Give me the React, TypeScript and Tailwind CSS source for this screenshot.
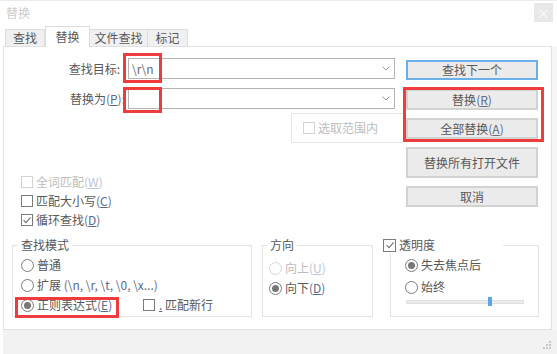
import clsx from "clsx";
import type { ReactNode } from "react";

/* Mnemonic such as (R) – latin part renders a little bluish, letter underlined */
function Key({ k, disabled = false }: { k: string; disabled?: boolean }) {
  return (
    <span className={disabled ? "text-[#bcc5d6]" : "text-[#5d6a86]"}>
      (<span className="underline underline-offset-[1px]">{k}</span>)
    </span>
  );
}

function CheckBox({ checked = false, disabled = false, big = false }: { checked?: boolean; disabled?: boolean; big?: boolean }) {
  return (
    <span
      className={clsx(
        "flex shrink-0 items-center justify-center border bg-white",
        big ? "h-[13px] w-[13px]" : "h-[12px] w-[12px]",
        disabled ? "border-[#d4d4d4]" : "border-[#7b7b7b]"
      )}
    >
      {checked && (
        <svg width="10" height="10" viewBox="0 0 10 10" fill="none">
          <path d="M1.6 5.2 4 7.6 8.6 2.4" stroke="#707070" strokeWidth="1.1" />
        </svg>
      )}
    </span>
  );
}

function Radio({ checked = false, disabled = false }: { checked?: boolean; disabled?: boolean }) {
  return (
    <span
      className={clsx(
        "flex h-[13px] w-[13px] shrink-0 items-center justify-center rounded-full border bg-white",
        disabled ? "border-[#d6d6d6]" : "border-[#7b7b7b]"
      )}
    >
      {checked && <span className="h-[7px] w-[7px] rounded-full bg-[#777777]" />}
    </span>
  );
}

function Btn({ children, className, focused = false }: { children: ReactNode; className: string; focused?: boolean }) {
  return (
    <button
      className={clsx(
        "flex w-[132px] items-center justify-center border-2 bg-[#ebebeb] leading-[16px] text-[#585858]",
        focused ? "border-[#6cb0ea]" : "border-[#d2d2d2]",
        className
      )}
    >
      {children}
    </button>
  );
}

function Combo({ value }: { value: string }) {
  return (
    <div className="flex h-[21px] w-[267px] items-center border border-[#b4b4b4] bg-white pl-[3px] pr-[4px]">
      <span className="flex-1 leading-[16px] text-[#6a6a6a]">{value}</span>
      <svg width="8" height="5" viewBox="0 0 8 5">
        <path d="M0.5 0.5 4 4 7.5 0.5" fill="none" stroke="#9a9a9a" />
      </svg>
    </div>
  );
}

export default function App() {
  return (
    <div className="flex h-[354px] w-[557px] flex-col overflow-hidden bg-white text-[12px] text-[#585858] [font-family:'Noto_Sans_CJK_SC','Microsoft_YaHei',sans-serif]">
      {/* title bar */}
      <div className="flex h-[24px] items-start justify-between border-t border-[#ececec]">
        <span className="ml-[6px] mt-[4px] leading-[16px] text-[#cccccc]">替换</span>
        <span className="mr-[4px] mt-[2px] flex h-[19px] w-[19px] items-center justify-center bg-[#e8e8e8] text-[13px] leading-none text-white">
          ×
        </span>
      </div>

      {/* tabs */}
      <div className="flex h-[22px] items-end pl-[5px]">
        <div className="flex h-[17px] w-[40px] items-center justify-center border border-b-0 border-[#dddddd] bg-[#f0f0f0] leading-[16px]">
          查找
        </div>
        <div className="relative z-10 -mb-px flex h-[21px] w-[45px] items-start justify-center border border-b-0 border-[#dddddd] bg-white pt-[2px] leading-[16px]">
          替换
        </div>
        <div className="flex h-[17px] w-[58px] items-center justify-center border border-b-0 border-l-0 border-[#dddddd] bg-[#f0f0f0] leading-[16px]">
          文件查找
        </div>
        <div className="flex h-[17px] w-[40px] items-center justify-center border border-b-0 border-l-0 border-[#dddddd] bg-[#f0f0f0] leading-[16px]">
          标记
        </div>
      </div>

      <div className="flex">
        <div className="w-[3px]" />
        <div className="relative h-[284px] w-[549px] border border-[#e1e1e1] bg-white">
          <div className="flex">
            {/* left column */}
            <div className="w-[399px]">
              <div className="mt-[11px] flex h-[21px] items-center">
                <span className="w-[121px] pr-[5px] text-right leading-[16px]">查找目标:</span>
                <span className="ml-[3px]">
                  <Combo value={"\\r\\n"} />
                </span>
              </div>
              <div className="mt-[9px] flex h-[21px] items-center">
                <span className="w-[121px] text-right leading-[16px]">
                  替换为<Key k="P" />:
                </span>
                <span className="ml-[3px]">
                  <Combo value="" />
                </span>
              </div>

              <div className="ml-[287px] mt-[4px] flex h-[30px] w-[112px] items-center gap-[3px] border border-r-0 border-[#e6e6e6] pl-[11px]">
                <CheckBox disabled />
                <span className="leading-[16px] text-[#bdbdbd]">选取范围内</span>
              </div>

              <div className="mt-[29px] flex flex-col pl-[17px]">
                <div className="flex h-[19px] items-center gap-[3px]">
                  <CheckBox disabled />
                  <span className="leading-[16px] text-[#bdbdbd]">
                    全词匹配<Key k="W" disabled />
                  </span>
                </div>
                <div className="flex h-[19px] items-center gap-[3px]">
                  <CheckBox />
                  <span className="leading-[16px]">
                    匹配大小写<Key k="C" />
                  </span>
                </div>
                <div className="flex h-[19px] items-center gap-[3px]">
                  <CheckBox checked />
                  <span className="leading-[16px]">
                    循环查找<Key k="D" />
                  </span>
                </div>
              </div>
            </div>

            {/* button column */}
            <div className="flex flex-col pl-[3px]">
              <Btn focused className="mt-[13px] h-[20px]">查找下一个</Btn>
              <Btn className="mt-[9px] h-[21px]">
                替换<Key k="R" />
              </Btn>
              <Btn className="mt-[8px] h-[21px]">
                全部替换<Key k="A" />
              </Btn>
              <Btn className="mt-[8px] h-[31px]">替换所有打开文件</Btn>
              <Btn className="mt-[8px] h-[21px]">取消</Btn>
            </div>
          </div>

          {/* group boxes */}
          <div className="mt-[8px] flex">
            <fieldset className="ml-[8px] h-[80px] w-[240px] border border-[#e3e3e3] pl-[8px]">
              <legend className="-ml-[3px] px-[3px] leading-[16px]">查找模式</legend>
              <div className="pt-[2px]">
                <div className="flex h-[20px] items-center gap-[3px]">
                  <Radio />
                  <span className="leading-[16px]">普通</span>
                </div>
                <div className="flex h-[20px] items-center gap-[3px]">
                  <Radio />
                  <span className="leading-[16px]">
                    扩展 <span className="text-[#5d6a86]">{"(\\n, \\r, \\t, \\0, \\x...)"}</span>
                  </span>
                </div>
                <div className="flex h-[20px] items-center">
                  <div className="flex w-[122px] items-center gap-[3px]">
                    <Radio checked />
                    <span className="leading-[16px]">
                      正则表达式<Key k="E" />
                    </span>
                  </div>
                  <CheckBox />
                  <span className="ml-[4px] leading-[16px]">
                    <span className="text-[#5d6a86] underline">.</span> 匹配新行
                  </span>
                </div>
              </div>
            </fieldset>

            <fieldset className="ml-[10px] h-[80px] w-[111px] border border-[#e3e3e3] pl-[6px]">
              <legend className="-ml-[2px] px-[3px] leading-[16px]">方向</legend>
              <div className="pt-[5px]">
                <div className="flex h-[20px] items-center gap-[3px]">
                  <Radio disabled />
                  <span className="leading-[16px] text-[#bdbdbd]">
                    向上<Key k="U" disabled />
                  </span>
                </div>
                <div className="flex h-[20px] items-center gap-[3px]">
                  <Radio checked />
                  <span className="leading-[16px]">
                    向下<Key k="D" />
                  </span>
                </div>
              </div>
            </fieldset>

            <fieldset className="ml-[17px] h-[80px] w-[149px] border border-[#e3e3e3] pl-[14px]">
              <legend className="-ml-[22px] flex h-[16px] w-[120px] items-center gap-[3px] bg-white">
                <CheckBox checked big />
                <span className="leading-[16px]">透明度</span>
              </legend>
              <div className="pt-[2px]">
                <div className="flex h-[20px] items-center gap-[3px]">
                  <Radio checked />
                  <span className="leading-[16px]">失去焦点后</span>
                </div>
                <div className="mt-[2px] flex h-[20px] items-center gap-[3px]">
                  <Radio />
                  <span className="leading-[16px]">始终</span>
                </div>
                <div className="relative ml-[1px] flex h-[10px] w-[118px] items-center">
                  <div className="h-[4px] w-full border border-[#e0e0e0] bg-[#ececec]" />
                  <div className="absolute left-[82px] top-0 h-[9px] w-[4px] bg-[#5aa7e8]" />
                </div>
              </div>
            </fieldset>
          </div>

          {/* red annotation frames */}
          <div className="absolute left-[119px] top-[6px] h-[30px] w-[39px] border-[3px] border-[#f03c3c]" />
          <div className="absolute left-[119px] top-[40px] h-[26px] w-[39px] border-[3px] border-[#f03c3c]" />
          <div className="absolute left-[399px] top-[40px] h-[55px] w-[141px] border-[3px] border-[#f03c3c]" />
          <div className="absolute left-[11px] top-[250px] h-[21px] w-[104px] border-[3px] border-[#f03c3c]" />
        </div>
        <div className="w-[5px] bg-[#f6f6f6]" />
      </div>

      {/* footer */}
      <div className="ml-[3px] flex flex-1 items-end justify-end bg-[#f2f2f2] pb-[4px] pr-[5px]">
        <svg width="9" height="9" viewBox="0 0 9 9" fill="#c9c9c9">
          <rect x="6" y="0" width="2" height="2" />
          <rect x="3" y="3" width="2" height="2" />
          <rect x="6" y="3" width="2" height="2" />
          <rect x="0" y="6" width="2" height="2" />
          <rect x="3" y="6" width="2" height="2" />
          <rect x="6" y="6" width="2" height="2" />
        </svg>
      </div>
    </div>
  );
}
